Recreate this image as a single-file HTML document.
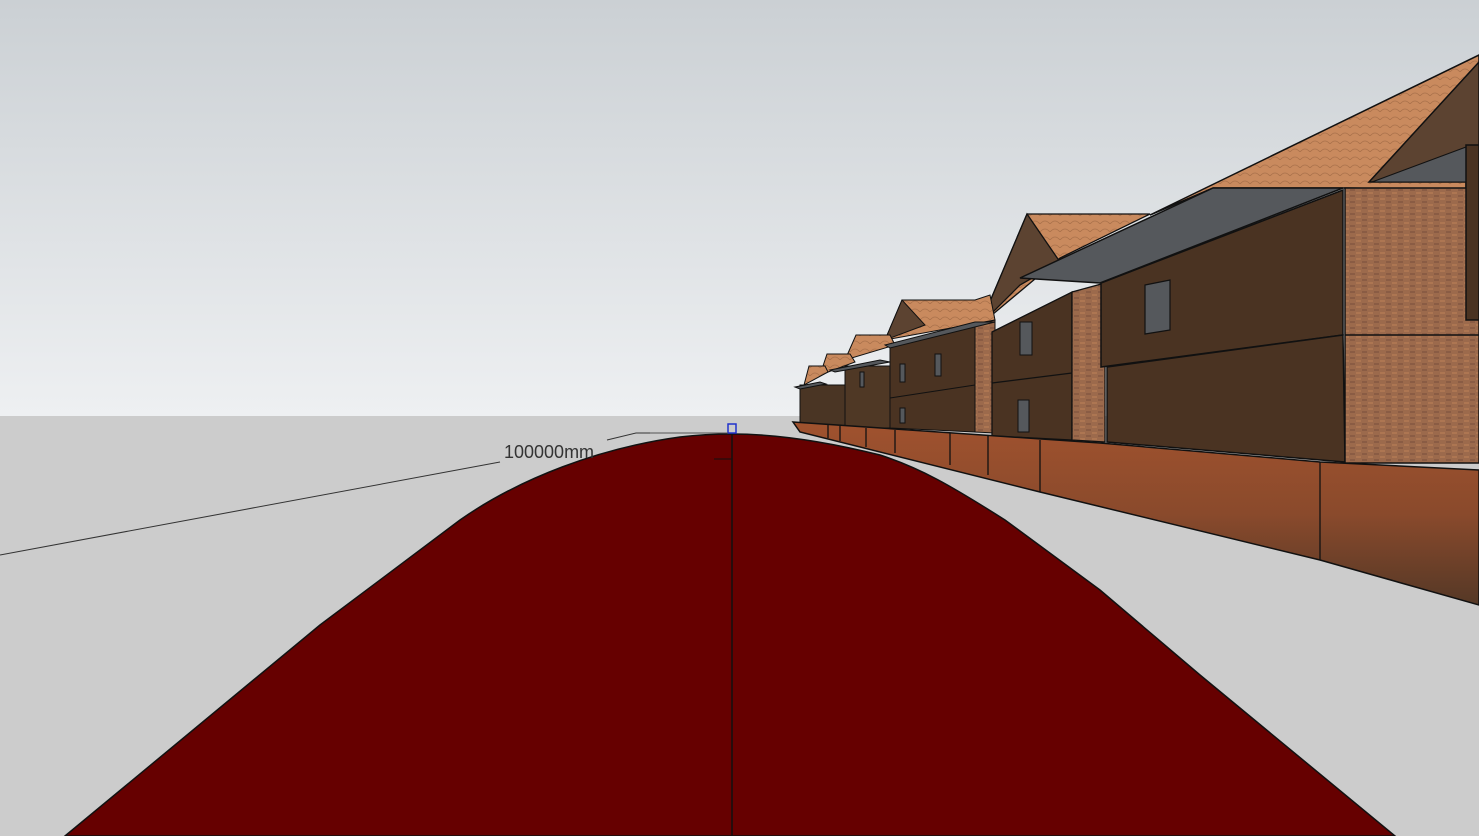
<!DOCTYPE html>
<html><head><meta charset="utf-8"><style>
html,body{margin:0;padding:0;width:1479px;height:836px;overflow:hidden;background:#ccc}
svg{display:block}
</style></head><body>
<svg width="1479" height="836" viewBox="0 0 1479 836" xmlns="http://www.w3.org/2000/svg">
<defs>
<linearGradient id="sky" x1="0" y1="0" x2="0" y2="1">
<stop offset="0" stop-color="#cbd0d4"/><stop offset="1" stop-color="#eef0f2"/>
</linearGradient>
<linearGradient id="fence" x1="0" y1="0" x2="0" y2="1">
<stop offset="0" stop-color="#a0522e"/><stop offset="0.5" stop-color="#8a4a2c"/><stop offset="1" stop-color="#553826"/>
</linearGradient>
<pattern id="brick" width="12" height="6" patternUnits="userSpaceOnUse">
<rect width="12" height="6" fill="#9c6a4c"/>
<rect x="0" y="0" width="5" height="2" fill="#ad7652"/><rect x="6" y="3" width="5" height="2" fill="#8a5c44"/>
</pattern>
<pattern id="tile" width="10" height="8" patternUnits="userSpaceOnUse">
<rect width="10" height="8" fill="#c98a5e"/><path d="M0 8 Q5 2 10 8" fill="none" stroke="#a8704a" stroke-width="0.8"/>
</pattern>
</defs>
<rect x="0" y="0" width="1479" height="417" fill="url(#sky)"/>
<rect x="0" y="416" width="1479" height="420" fill="#cccccc"/>

<polygon points="1150,215 1479,55 1479,190 1345,188 1213,188" fill="url(#tile)" stroke="#111" stroke-width="1.5"/>
<polygon points="1369,182 1479,62 1479,320 1466,320 1466,182" fill="#5c4331" stroke="#111" stroke-width="1.5"/>
<polygon points="1372,182 1466,147 1466,182" fill="#55585c" stroke="#111"/>

<polygon points="980,325 1027,214 1150,214 1060,258" fill="url(#tile)" stroke="#111" stroke-width="1.3"/>
<polygon points="980,325 1027,214 1060,262 1020,285" fill="#5c4331" stroke="#111" stroke-width="1.3"/>

<polygon points="885,340 902,300 975,300 990,295 995,320" fill="url(#tile)" stroke="#111"/>
<polygon points="885,340 902,300 925,325" fill="#5c4331" stroke="#111"/>
<polygon points="845,360 856,335 890,335 895,345" fill="url(#tile)" stroke="#111"/>
<polygon points="820,375 827,354 850,354 855,362" fill="url(#tile)" stroke="#111"/>
<polygon points="804,385 809,366 825,366 828,372" fill="url(#tile)" stroke="#111"/>

<rect x="800" y="385" width="60" height="45" fill="#4a3524" stroke="#111"/>
<rect x="845" y="366" width="45" height="62" fill="#4f3825" stroke="#111"/>
<polygon points="890,345 975,325 975,432 890,428" fill="#4a3322" stroke="#111"/>
<polygon points="975,325 995,320 995,433 975,432" fill="url(#brick)" stroke="#111"/>
<line x1="890" y1="398" x2="975" y2="385" stroke="#111"/>
<polygon points="885,345 975,322 995,322 890,348" fill="#55585c" stroke="#111"/>
<polygon points="830,370 880,360 890,362 835,372" fill="#55585c" stroke="#111"/>
<polygon points="795,387 820,382 826,384 800,389" fill="#55585c" stroke="#111"/>
<rect x="900" y="364" width="5" height="18" fill="#55585c" stroke="#111"/>
<rect x="935" y="354" width="6" height="22" fill="#55585c" stroke="#111"/>
<rect x="900" y="408" width="5" height="15" fill="#55585c" stroke="#111"/>
<rect x="860" y="372" width="4" height="15" fill="#55585c" stroke="#111"/>

<polygon points="992,332 1072,292 1072,440 992,436" fill="#4a3322" stroke="#111" stroke-width="1.3"/>
<line x1="992" y1="383" x2="1072" y2="373" stroke="#111" stroke-width="1.3"/>
<polygon points="1072,292 1105,283 1105,442 1072,440" fill="url(#brick)" stroke="#111" stroke-width="1.3"/>
<rect x="1020" y="322" width="12" height="33" fill="#55585c" stroke="#111"/>
<rect x="1018" y="400" width="11" height="32" fill="#55585c" stroke="#111"/>

<polygon points="1101,283 1343,190 1343,335 1101,367" fill="#4a3322" stroke="#111" stroke-width="1.5"/>
<polygon points="1107,367 1343,335 1345,462 1107,442" fill="#4a3322" stroke="#111" stroke-width="1.5"/>
<rect x="1345" y="188" width="134" height="275" fill="url(#brick)" stroke="#111" stroke-width="1.5"/>
<line x1="1345" y1="335" x2="1479" y2="335" stroke="#111" stroke-width="1.5"/>
<rect x="1466" y="145" width="13" height="175" fill="#4a3322" stroke="#111" stroke-width="1.5"/>
<polygon points="1020,278 1213,188 1343,188 1100,283" fill="#55585c" stroke="#111" stroke-width="1.5"/>
<polygon points="1145,285 1170,280 1170,330 1145,334" fill="#55585c" stroke="#111" stroke-width="1.2"/>

<polygon points="793,422 1100,443 1320,462 1479,470 1479,605 1320,560 1040,492 800,432" fill="url(#fence)" stroke="#111" stroke-width="1.5"/>
<g stroke="#111" stroke-width="1.3">
<line x1="1320" y1="462" x2="1320" y2="560"/>
<line x1="1040" y1="440" x2="1040" y2="492"/>
<line x1="988" y1="435" x2="988" y2="475"/>
<line x1="950" y1="433" x2="950" y2="465"/>
<line x1="895" y1="430" x2="895" y2="453"/>
<line x1="866" y1="428" x2="866" y2="447"/>
<line x1="840" y1="426" x2="840" y2="441"/>
<line x1="828" y1="425" x2="828" y2="438"/>
</g>

<path d="M65,836 L320,625 L460,520 C520,478 600,448 680,437 C705,434 720,434 732,434 C770,434 820,440 880,455 C920,468 950,485 1005,520 L1100,590 L1200,675 L1395,836 Z" fill="#660000" stroke="#111" stroke-width="1.5"/>
<line x1="732" y1="434" x2="732" y2="836" stroke="#111" stroke-width="1.5"/>
<line x1="714" y1="459" x2="732" y2="459" stroke="#111" stroke-width="1"/>
<rect x="728" y="424" width="8" height="9" fill="none" stroke="#2233cc" stroke-width="1.5"/>

<line x1="0" y1="555" x2="500" y2="462" stroke="#333" stroke-width="1"/>
<polyline points="607,440 636,433 650,433" fill="none" stroke="#333" stroke-width="1"/>
<line x1="650" y1="433" x2="728" y2="433" stroke="#555" stroke-width="1"/>
<text x="504" y="458" font-family="Liberation Sans, sans-serif" font-size="18" fill="#333">100000mm</text>
</svg>
</body></html>
